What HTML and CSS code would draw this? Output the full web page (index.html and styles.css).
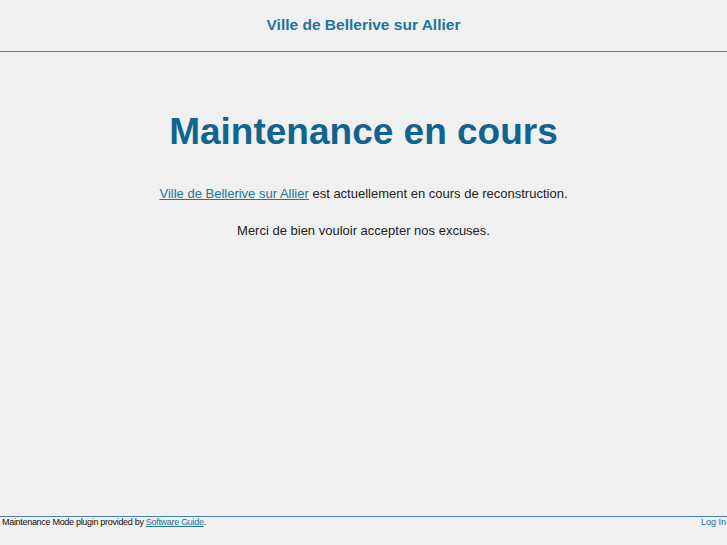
FILE: index.html
```html
<!DOCTYPE html>
<html lang="fr">
<head>
<meta charset="utf-8">
<title>Ville de Bellerive sur Allier</title>
<link rel="stylesheet" href="styles.css">
</head>
<body>
<div class="page">
  <header class="site-header">
    <a class="site-title" href="#">Ville de Bellerive sur Allier</a>
  </header>
  <main class="content">
    <h1 class="headline">Maintenance en cours</h1>
    <p class="msg"><a href="#" class="inline-link">Ville de Bellerive sur Allier</a> est actuellement en cours de reconstruction.</p>
    <p class="msg">Merci de bien vouloir accepter nos excuses.</p>
  </main>
  <footer class="site-footer">
    <span class="credit">Maintenance Mode plugin provided by <a href="#" class="credit-link">Software Guide</a>.</span>
    <a href="#" class="login">Log In</a>
  </footer>
</div>
</body>
</html>
```
FILE: styles.css
```css
html, body {
  margin: 0;
  padding: 0;
  height: 100%;
}
body {
  background: #f0f0f0;
  font-family: "Liberation Sans", Arial, sans-serif;
  color: #222;
}
.page {
  height: 100%;
  display: flex;
  flex-direction: column;
}
.site-header {
  height: 52px;
  border-bottom: 1px solid #4a83a6;
  display: flex;
  align-items: center;
  justify-content: center;
  box-sizing: border-box;
}
.site-title {
  font-size: 15.5px;
  font-weight: bold;
  color: #21759b;
  text-decoration: none;
  margin-top: -1px;
}
.content {
  flex: 1;
  text-align: center;
  padding-top: 56px;
}
.headline {
  margin: 0 0 30px;
  font-size: 37px;
  line-height: 48px;
  font-weight: bold;
  color: #106490;
}
.msg {
  margin: 0 0 21px;
  font-size: 13px;
  line-height: 16px;
  color: #222;
}
.inline-link {
  color: #21759b;
}
.site-footer {
  height: 28px;
  border-top: 1px solid #4a83a6;
  display: flex;
  justify-content: space-between;
  align-items: flex-start;
  padding: 0 1px 0 2px;
  font-size: 9px;
  line-height: 11px;
}
.credit {
  color: #111;
  letter-spacing: -0.3px;
}
.credit-link {
  color: #21759b;
}
.login {
  color: #21759b;
  text-decoration: none;
}
```
